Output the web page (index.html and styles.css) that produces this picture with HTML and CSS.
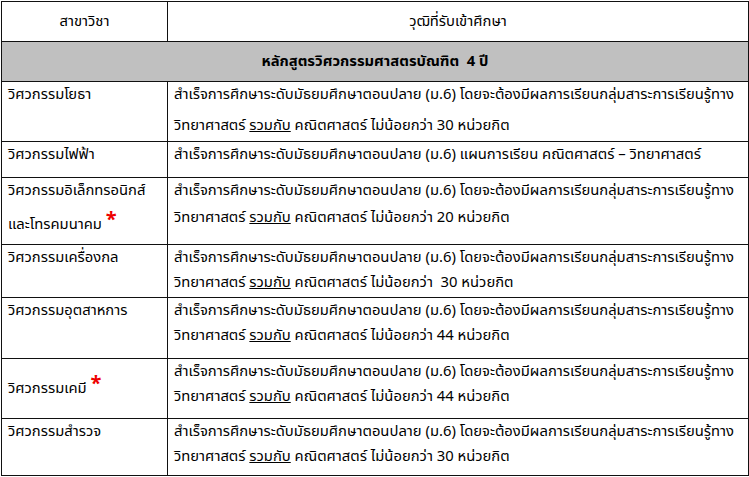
FILE: index.html
```html
<!DOCTYPE html>
<html lang="th">
<head>
<meta charset="utf-8">
<title>หลักสูตรวิศวกรรมศาสตรบัณฑิต</title>
<link rel="stylesheet" href="styles.css">
</head>
<body>
<table class="tbl">
  <colgroup><col class="c1"><col class="c2"></colgroup>
  <tr class="r-head">
    <th>สาขาวิชา</th>
    <th>วุฒิที่รับเข้าศึกษา</th>
  </tr>
  <tr class="r-group">
    <td colspan="2">หลักสูตรวิศวกรรมศาสตรบัณฑิต&nbsp; 4 ปี</td>
  </tr>
  <tr class="r r-civil">
    <td><div class="ln">วิศวกรรมโยธา</div></td>
    <td><div class="ln">สำเร็จการศึกษาระดับมัธยมศึกษาตอนปลาย (ม.6) โดยจะต้องมีผลการเรียนกลุ่มสาระการเรียนรู้ทาง</div><div class="ln l2">วิทยาศาสตร์ <u>รวมกับ</u> คณิตศาสตร์ ไม่น้อยกว่า 30 หน่วยกิต</div></td>
  </tr>
  <tr class="r r-elec">
    <td><div class="ln">วิศวกรรมไฟฟ้า</div></td>
    <td><div class="ln">สำเร็จการศึกษาระดับมัธยมศึกษาตอนปลาย (ม.6) แผนการเรียน คณิตศาสตร์ – วิทยาศาสตร์</div></td>
  </tr>
  <tr class="r r-tele">
    <td><div class="ln">วิศวกรรมอิเล็กทรอนิกส์</div><div class="ln l2 wide">และโทรคมนาคม <span class="star">*</span></div></td>
    <td><div class="ln">สำเร็จการศึกษาระดับมัธยมศึกษาตอนปลาย (ม.6) โดยจะต้องมีผลการเรียนกลุ่มสาระการเรียนรู้ทาง</div><div class="ln l2">วิทยาศาสตร์ <u>รวมกับ</u> คณิตศาสตร์ ไม่น้อยกว่า 20 หน่วยกิต</div></td>
  </tr>
  <tr class="r r-mech">
    <td><div class="ln">วิศวกรรมเครื่องกล</div></td>
    <td><div class="ln">สำเร็จการศึกษาระดับมัธยมศึกษาตอนปลาย (ม.6) โดยจะต้องมีผลการเรียนกลุ่มสาระการเรียนรู้ทาง</div><div class="ln">วิทยาศาสตร์ <u>รวมกับ</u> คณิตศาสตร์ ไม่น้อยกว่า&nbsp; 30 หน่วยกิต</div></td>
  </tr>
  <tr class="r r-ind">
    <td><div class="ln">วิศวกรรมอุตสาหการ</div></td>
    <td><div class="ln">สำเร็จการศึกษาระดับมัธยมศึกษาตอนปลาย (ม.6) โดยจะต้องมีผลการเรียนกลุ่มสาระการเรียนรู้ทาง</div><div class="ln">วิทยาศาสตร์ <u>รวมกับ</u> คณิตศาสตร์ ไม่น้อยกว่า 44 หน่วยกิต</div></td>
  </tr>
  <tr class="r r-chem">
    <td class="mid"><div class="ln">วิศวกรรมเคมี <span class="star">*</span></div></td>
    <td><div class="ln">สำเร็จการศึกษาระดับมัธยมศึกษาตอนปลาย (ม.6) โดยจะต้องมีผลการเรียนกลุ่มสาระการเรียนรู้ทาง</div><div class="ln">วิทยาศาสตร์ <u>รวมกับ</u> คณิตศาสตร์ ไม่น้อยกว่า 44 หน่วยกิต</div></td>
  </tr>
  <tr class="r r-survey">
    <td><div class="ln">วิศวกรรมสำรวจ</div></td>
    <td><div class="ln">สำเร็จการศึกษาระดับมัธยมศึกษาตอนปลาย (ม.6) โดยจะต้องมีผลการเรียนกลุ่มสาระการเรียนรู้ทาง</div><div class="ln">วิทยาศาสตร์ <u>รวมกับ</u> คณิตศาสตร์ ไม่น้อยกว่า 30 หน่วยกิต</div></td>
  </tr>
</table>
</body>
</html>
```

FILE: styles.css
```css
html, body {
  margin: 0;
  padding: 0;
  background: #fff;
}
body {
  padding: 1px 0 0 1px;
  font-family: Tahoma, "Noto Sans Thai", "DejaVu Sans", sans-serif;
  font-size: 14.8px;
  color: #000;
}
.tbl {
  border-collapse: collapse;
  width: 747px;
  table-layout: fixed;
}
.c1 { width: 166px; }
.c2 { width: 581px; }
.tbl th, .tbl td {
  border: 1px solid #111;
  padding: 0 6px;
  vertical-align: top;
  white-space: nowrap;
  overflow: hidden;
}
.tbl th {
  font-weight: normal;
  text-align: center;
  height: 39px;
  vertical-align: middle;
}
.r-group td {
  background: #c0c0c0;
  font-weight: bold;
  text-align: center;
  height: 39px;
  vertical-align: middle;
}
.ln {
  line-height: 25px;
}
.r-civil td { height: 59px; }
.r-civil .l2 { margin-top: 6px; }
.r-elec td { height: 35px; }
.r-tele td { height: 66px; }
.r-tele .l2 { margin-top: 2px; }
.r-tele .wide { margin-top: 9px; }
.r-mech td { height: 52px; }
.r-ind td { height: 60px; }
.r-chem td { height: 59px; }
.r-chem td.mid { vertical-align: middle; }
.r-survey td { height: 56px; }
.star {
  color: #e00;
  font-weight: bold;
  font-size: 20px;
  line-height: 0;
  position: relative;
  top: -3px;
}
```
